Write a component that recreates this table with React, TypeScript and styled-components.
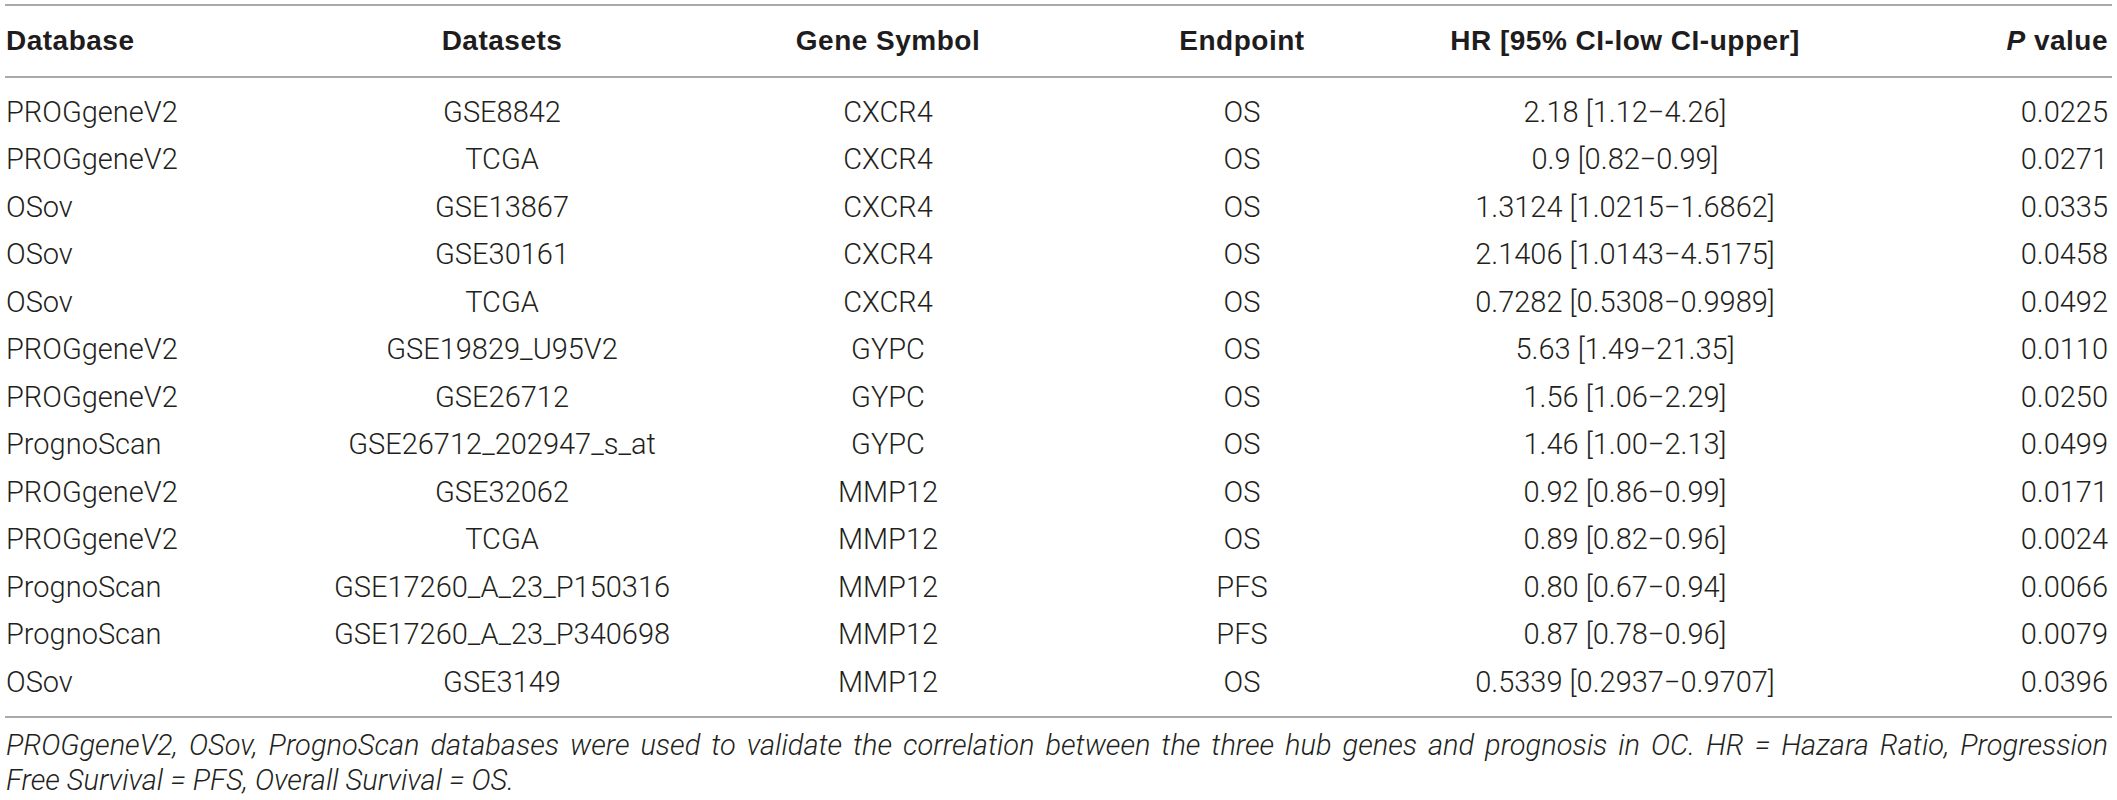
import React from "react";
import styled, { createGlobalStyle } from "styled-components";

const GlobalStyle = createGlobalStyle`
  html, body {
    margin: 0;
    padding: 0;
    background: #ffffff;
  }
  body {
    font-family: "Liberation Sans", Arial, sans-serif;
    color: #231f20;
  }
`;

const Page = styled.div`
  width: 2117px;
  padding: 4px 5px 0 5px;
  box-sizing: border-box;
`;

const Table = styled.div`
  display: flex;
  flex-direction: column;
  border-top: 2px solid #a9a9a9;
  border-bottom: 2px solid #a9a9a9;
`;

const columns = "295px 404px 368px 340px 426px 1fr";

const HeaderRow = styled.div`
  display: grid;
  grid-template-columns: ${columns};
  align-items: center;
  height: 70px;
  border-bottom: 2px solid #a9a9a9;
`;

const HeadCell = styled.div<{ $align: "left" | "center" | "right" }>`
  text-align: ${(p) => p.$align};
  font-weight: 700;
  font-size: 28px;
  letter-spacing: 0.5px;
  color: #1e1c1d;
  padding: ${(p) => (p.$align === "left" ? "0 0 0 1px" : p.$align === "right" ? "0 4px 0 0" : "0")};
  white-space: nowrap;
`;

const Body = styled.div`
  display: flex;
  flex-direction: column;
  padding: 10px 0;
`;

const Row = styled.div`
  display: grid;
  grid-template-columns: ${columns};
  align-items: center;
  height: 47.5px;
`;

const Cell = styled.div<{ $align: "left" | "center" | "right" }>`
  text-align: ${(p) => p.$align};
  font-family: Roboto, "Liberation Sans", sans-serif;
  font-weight: 300;
  font-size: 29px;
  color: #231f20;
  padding: ${(p) => (p.$align === "left" ? "0 0 0 1px" : p.$align === "right" ? "0 4px 0 0" : "0")};
  white-space: nowrap;
`;

const Footnote = styled.div`
  margin-top: 10px;
  padding: 0 4px 0 1px;
  font-family: Roboto, "Liberation Sans", sans-serif;
  font-weight: 300;
  font-style: italic;
  font-size: 29px;
  line-height: 35px;
  color: #231f20;
`;

const JustifiedLine = styled.div`
  text-align: justify;
  text-align-last: justify;
  white-space: nowrap;
`;

const PlainLine = styled.div`
  text-align: left;
`;

type Align = "left" | "center" | "right";
const aligns: Align[] = ["left", "center", "center", "center", "center", "right"];

const rows: string[][] = [
  ["PROGgeneV2", "GSE8842", "CXCR4", "OS", "2.18 [1.12\u22124.26]", "0.0225"],
  ["PROGgeneV2", "TCGA", "CXCR4", "OS", "0.9 [0.82\u22120.99]", "0.0271"],
  ["OSov", "GSE13867", "CXCR4", "OS", "1.3124 [1.0215\u22121.6862]", "0.0335"],
  ["OSov", "GSE30161", "CXCR4", "OS", "2.1406 [1.0143\u22124.5175]", "0.0458"],
  ["OSov", "TCGA", "CXCR4", "OS", "0.7282 [0.5308\u22120.9989]", "0.0492"],
  ["PROGgeneV2", "GSE19829_U95V2", "GYPC", "OS", "5.63 [1.49\u221221.35]", "0.0110"],
  ["PROGgeneV2", "GSE26712", "GYPC", "OS", "1.56 [1.06\u22122.29]", "0.0250"],
  ["PrognoScan", "GSE26712_202947_s_at", "GYPC", "OS", "1.46 [1.00\u22122.13]", "0.0499"],
  ["PROGgeneV2", "GSE32062", "MMP12", "OS", "0.92 [0.86\u22120.99]", "0.0171"],
  ["PROGgeneV2", "TCGA", "MMP12", "OS", "0.89 [0.82\u22120.96]", "0.0024"],
  ["PrognoScan", "GSE17260_A_23_P150316", "MMP12", "PFS", "0.80 [0.67\u22120.94]", "0.0066"],
  ["PrognoScan", "GSE17260_A_23_P340698", "MMP12", "PFS", "0.87 [0.78\u22120.96]", "0.0079"],
  ["OSov", "GSE3149", "MMP12", "OS", "0.5339 [0.2937\u22120.9707]", "0.0396"],
];

export default function App() {
  return (
    <>
      <GlobalStyle />
      <Page>
        <Table>
          <HeaderRow>
            <HeadCell $align="left">Database</HeadCell>
            <HeadCell $align="center">Datasets</HeadCell>
            <HeadCell $align="center">Gene Symbol</HeadCell>
            <HeadCell $align="center">Endpoint</HeadCell>
            <HeadCell $align="center">HR [95% CI-low CI-upper]</HeadCell>
            <HeadCell $align="right">
              <i>P</i> value
            </HeadCell>
          </HeaderRow>
          <Body>
            {rows.map((r, i) => (
              <Row key={i}>
                {r.map((c, j) => (
                  <Cell key={j} $align={aligns[j]}>
                    {c}
                  </Cell>
                ))}
              </Row>
            ))}
          </Body>
        </Table>
        <Footnote>
          <JustifiedLine>
            PROGgeneV2, OSov, PrognoScan databases were used to validate the correlation between the three hub genes and prognosis in OC. HR = Hazara Ratio, Progression
          </JustifiedLine>
          <PlainLine>Free Survival = PFS, Overall Survival = OS.</PlainLine>
        </Footnote>
      </Page>
    </>
  );
}
